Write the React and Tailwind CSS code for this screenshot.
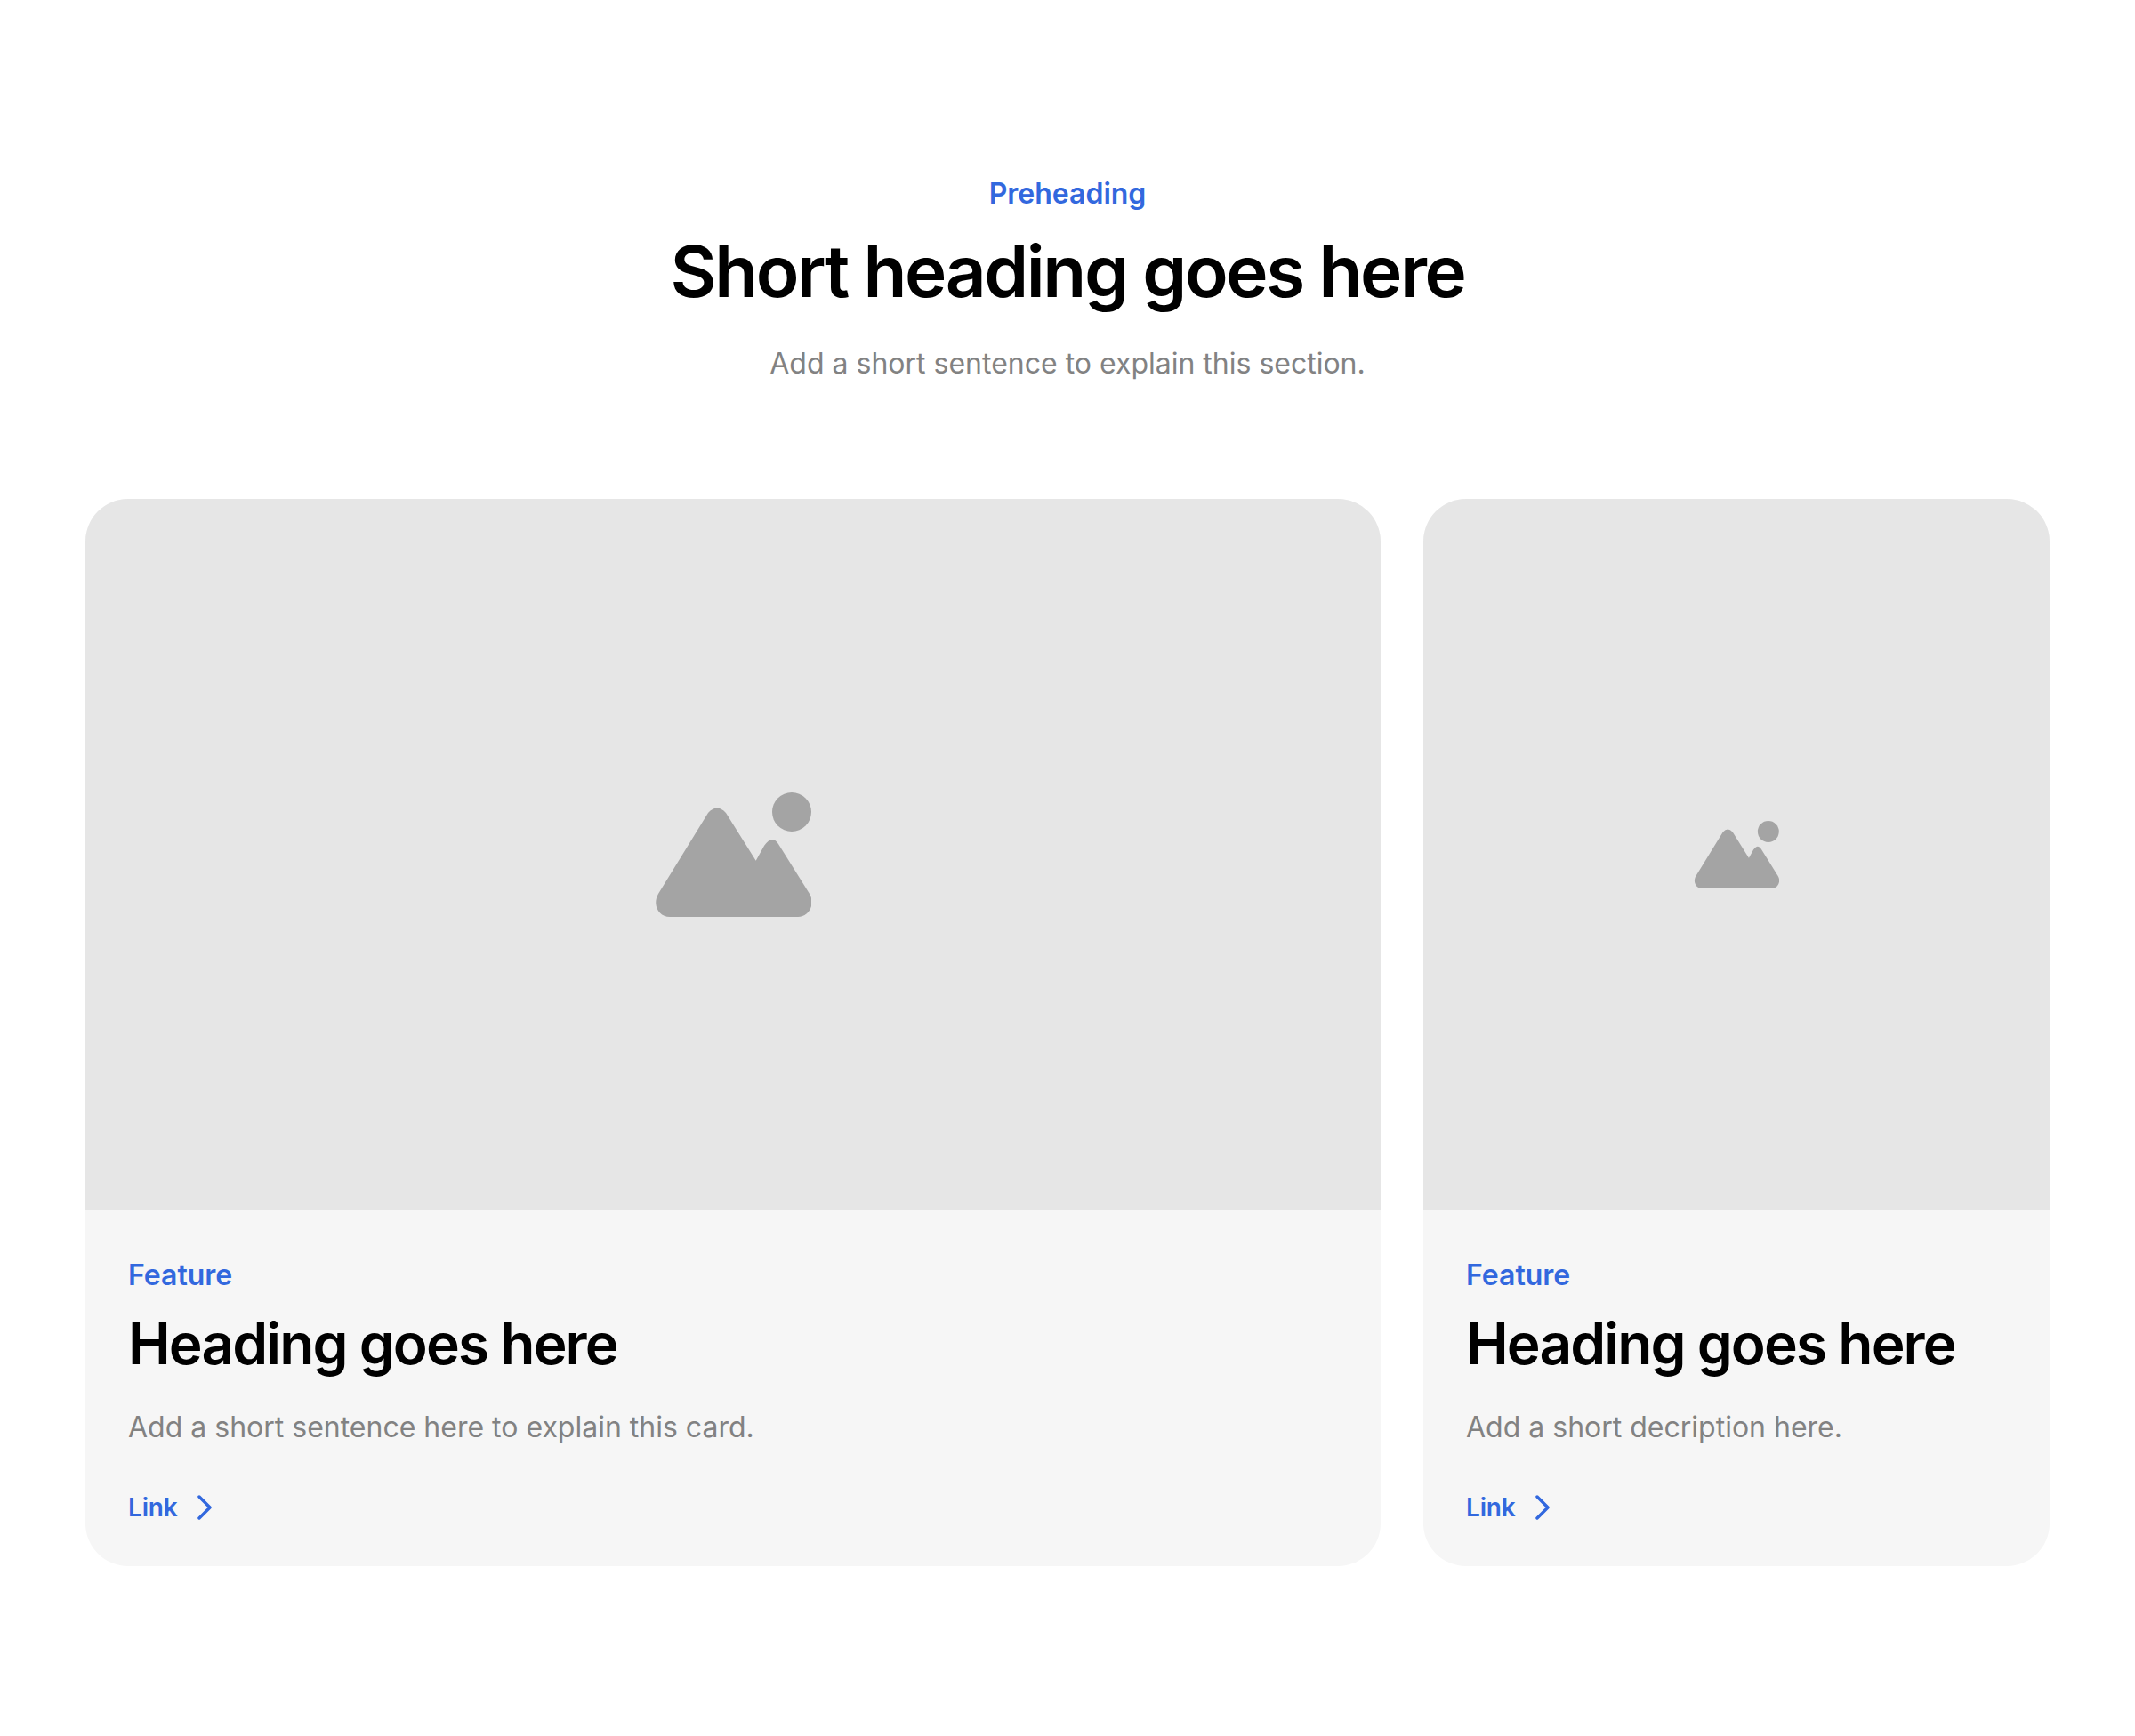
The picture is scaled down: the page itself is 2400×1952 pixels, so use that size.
const F = { fontFamily: 'Inter, sans-serif' };

function Mountain({ className }) {
  return (
    <svg viewBox="0 0 176 140" className={className} fill="#a4a4a4">
      <circle cx="154" cy="22" r="22" />
      <path d="M17 140 C4 140 -3 126 4 114 L60 23 Q70 12 80 23 L113.7 76.7 L123 60 Q132 47 139 58 L174 114 C181 126 173 140 161 140 Z" />
    </svg>
  );
}

function Card({ desc, className, icon }) {
  return (
    <div className={`rounded-[48px] overflow-hidden bg-[#f6f6f6] flex flex-col ${className}`}>
      <div className="h-[800px] bg-[#e6e6e6] flex items-center justify-center">{icon}</div>
      <div className="px-12 pt-[49px] pb-[42px] flex flex-col">
        <div className="text-[32px] leading-[48px] font-semibold text-[#3268de]">Feature</div>
        <h3 className="text-[64px] leading-[80px] font-semibold tracking-[-1.9px] text-black mt-[13px]">Heading goes here</h3>
        <p className="text-[32px] leading-[48px] text-[#828282] mt-[30px]">{desc}</p>
        <div className="flex items-center gap-[21px] mt-[42px] h-[48px]">
          <span className="text-[28px] font-semibold text-[#3268de] tracking-[-0.2px]">Link</span>
          <svg width="20" height="28" viewBox="0 0 20 28" fill="none" stroke="#3268de" strokeWidth="3.5" strokeLinecap="round" strokeLinejoin="round"><path d="M4 2 L16 14 L4 26" /></svg>
        </div>
      </div>
    </div>
  );
}

export default function App() {
  return (
    <div style={F} className="w-[2400px] h-[1952px] bg-white px-24 pt-[194px]">
      <div className="flex flex-col items-center">
        <div className="text-[32px] leading-[48px] font-semibold text-[#3268de]">Preheading</div>
        <h1 className="text-[80px] leading-[96px] font-semibold tracking-[-2.4px] text-black mt-[15px]">Short heading goes here</h1>
        <p className="text-[32px] leading-[48px] text-[#828282] mt-[32px]">Add a short sentence to explain this section.</p>
      </div>
      <div className="flex gap-12 mt-[128px]">
        <Card className="w-[1456px]" desc="Add a short sentence here to explain this card." icon={<Mountain className="w-[176px] h-[140px]" />} />
        <Card className="w-[704px]" desc="Add a short decription here." icon={<Mountain className="w-[96px] h-[76px]" />} />
      </div>
    </div>
  );
}
